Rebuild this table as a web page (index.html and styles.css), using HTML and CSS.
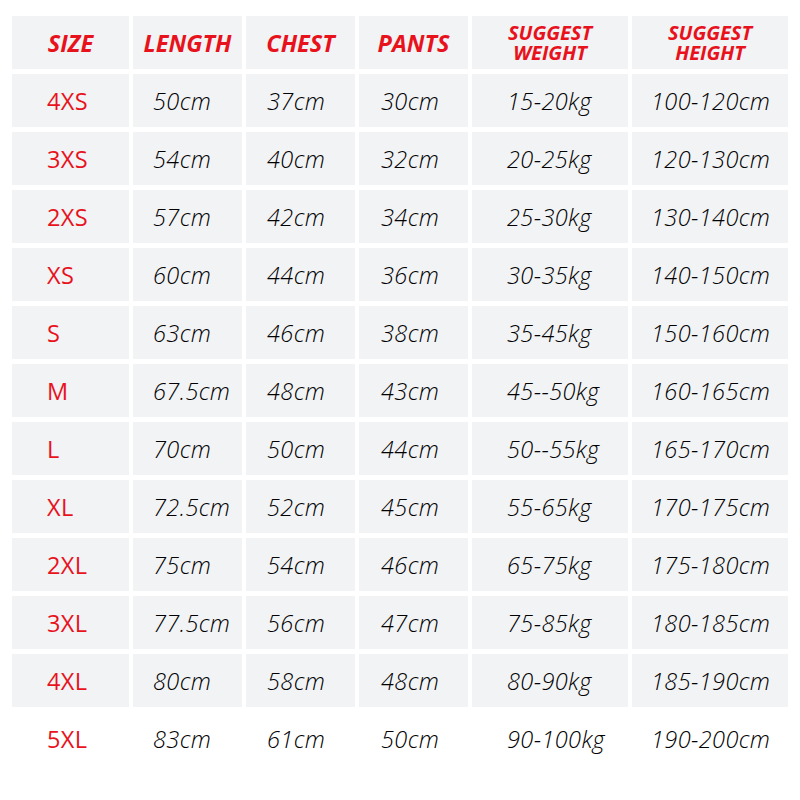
FILE: index.html
```html
<!DOCTYPE html>
<html>
<head>
<meta charset="utf-8">
<link rel="stylesheet" href="styles.css">
</head>
<body>
<div class="chart">
  <div class="cell head"><span>SIZE</span></div>
  <div class="cell head"><span>LENGTH</span></div>
  <div class="cell head"><span>CHEST</span></div>
  <div class="cell head"><span>PANTS</span></div>
  <div class="cell head two"><span>SUGGEST<br>WEIGHT</span></div>
  <div class="cell head two"><span>SUGGEST<br>HEIGHT</span></div>

  <div class="cell size">4XS</div><div class="cell c2">50cm</div><div class="cell c3">37cm</div><div class="cell c4">30cm</div><div class="cell c5">15-20kg</div><div class="cell c6">100-120cm</div>
  <div class="cell size">3XS</div><div class="cell c2">54cm</div><div class="cell c3">40cm</div><div class="cell c4">32cm</div><div class="cell c5">20-25kg</div><div class="cell c6">120-130cm</div>
  <div class="cell size">2XS</div><div class="cell c2">57cm</div><div class="cell c3">42cm</div><div class="cell c4">34cm</div><div class="cell c5">25-30kg</div><div class="cell c6">130-140cm</div>
  <div class="cell size">XS</div><div class="cell c2">60cm</div><div class="cell c3">44cm</div><div class="cell c4">36cm</div><div class="cell c5">30-35kg</div><div class="cell c6">140-150cm</div>
  <div class="cell size">S</div><div class="cell c2">63cm</div><div class="cell c3">46cm</div><div class="cell c4">38cm</div><div class="cell c5">35-45kg</div><div class="cell c6">150-160cm</div>
  <div class="cell size">M</div><div class="cell c2">67.5cm</div><div class="cell c3">48cm</div><div class="cell c4">43cm</div><div class="cell c5">45--50kg</div><div class="cell c6">160-165cm</div>
  <div class="cell size">L</div><div class="cell c2">70cm</div><div class="cell c3">50cm</div><div class="cell c4">44cm</div><div class="cell c5">50--55kg</div><div class="cell c6">165-170cm</div>
  <div class="cell size">XL</div><div class="cell c2">72.5cm</div><div class="cell c3">52cm</div><div class="cell c4">45cm</div><div class="cell c5">55-65kg</div><div class="cell c6">170-175cm</div>
  <div class="cell size">2XL</div><div class="cell c2">75cm</div><div class="cell c3">54cm</div><div class="cell c4">46cm</div><div class="cell c5">65-75kg</div><div class="cell c6">175-180cm</div>
  <div class="cell size">3XL</div><div class="cell c2">77.5cm</div><div class="cell c3">56cm</div><div class="cell c4">47cm</div><div class="cell c5">75-85kg</div><div class="cell c6">180-185cm</div>
  <div class="cell size">4XL</div><div class="cell c2">80cm</div><div class="cell c3">58cm</div><div class="cell c4">48cm</div><div class="cell c5">80-90kg</div><div class="cell c6">185-190cm</div>
  <div class="cell size last">5XL</div><div class="cell c2 last">83cm</div><div class="cell c3 last">61cm</div><div class="cell c4 last">50cm</div><div class="cell c5 last">90-100kg</div><div class="cell c6 last">190-200cm</div>
</div>
</body>
</html>
```
FILE: styles.css
```css
html, body {
  margin: 0;
  padding: 0;
  background: #ffffff;
}
body {
  width: 800px;
  height: 800px;
  overflow: hidden;
  font-family: "Open Sans", "Liberation Sans", sans-serif;
}
.chart {
  display: grid;
  grid-template-columns: 117px 109px 109px 109px 156px 156px;
  grid-auto-rows: 53px;
  column-gap: 4px;
  row-gap: 5px;
  padding: 16px 0 0 12px;
}
.cell {
  background: #f2f3f5;
  display: flex;
  align-items: center;
  font-size: 23.5px;
  font-weight: 350;
  letter-spacing: 0.4px;
  font-style: italic;
  color: #000000;
  white-space: nowrap;
}
.cell.last {
  background: transparent;
}
.head {
  justify-content: center;
  color: #e8121c;
  font-weight: 700;
  font-size: 23.5px;
  letter-spacing: 0;
}
.head.two {
  font-size: 20px;
  line-height: 20px;
  text-align: center;
}
.size {
  color: #e8121c;
  font-style: normal;
  font-weight: 400;
  padding-left: 35px;
}
.c2 { padding-left: 20px; }
.c3 { padding-left: 21px; }
.c4 { padding-left: 22px; }
.c5 { padding-left: 35px; }
.c6 { padding-left: 19px; }
```
